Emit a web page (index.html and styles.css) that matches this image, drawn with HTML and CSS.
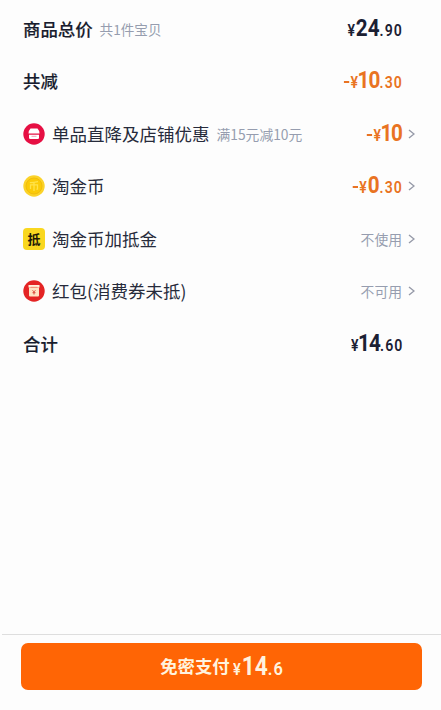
FILE: index.html
```html
<!DOCTYPE html>
<html lang="zh-CN">
<head>
<meta charset="utf-8">
<title>订单结算</title>
<link rel="stylesheet" href="styles.css">
</head>
<body>
<main class="summary">
  <div class="row total"><span class="label">商品总价</span><span class="note">共1件宝贝</span><span class="price"><span class="yen">¥</span><b>24</b><span class="cents">.90</span></span></div>
  <div class="row total"><span class="label">共减</span><span class="price off"><span class="minus"></span><span class="yen">¥</span><b class="narrow">10</b><span class="cents">.30</span></span></div>
  <div class="row">
    <svg class="icon" viewBox="0 0 22 22"><circle cx="11" cy="11" r="10.700" fill="#e60f43"/><path d="M7.500 5.500h7Q16.500 7.500 16.500 10.500h-11Q5.500 7.500 7.500 5.500z" fill="#fff"/><path d="M6 11.800h10v3q0 1.200-1.200 1.200H7.200Q6 16 6 14.800z" fill="#fff"/><path d="M8.500 13.300h5" stroke="#f08aa3" stroke-width=".8"/></svg>
    <span class="label">单品直降及店铺优惠</span><span class="note">满15元减10元</span><span class="price off"><span class="minus"></span><span class="yen">¥</span><b class="narrow whole">10</b></span>
    <svg class="chevron" viewBox="0 0 7 10"><path d="M1 1l5 4-5 4"/></svg>
  </div>
  <div class="row">
    <svg class="icon" viewBox="0 0 22 22"><circle cx="11" cy="11" r="10.700" fill="#fbd32a"/><circle cx="11" cy="11" r="8" fill="#fbcb08" stroke="#f2bd0c"/><path d="M6.800 7.700Q11 7.500 15 6.700M7.500 14V9.800h7V14l-1 .3M11 7.500V16" fill="none" stroke="#ffe34a" stroke-width="1.300"/></svg>
    <span class="label">淘金币</span><span class="price off"><span class="minus"></span><span class="yen">¥</span><b>0</b><span class="cents">.30</span></span>
    <svg class="chevron" viewBox="0 0 7 10"><path d="M1 1l5 4-5 4"/></svg>
  </div>
  <div class="row">
    <span class="icon badge">抵</span>
    <span class="label">淘金币加抵金</span><span class="status">不使用</span>
    <svg class="chevron" viewBox="0 0 7 10"><path d="M1 1l5 4-5 4"/></svg>
  </div>
  <div class="row">
    <svg class="icon" viewBox="0 0 22 22"><circle cx="11" cy="11" r="10.700" fill="#e42424"/><path d="M5.500 5h11v2.500h-11z" fill="#fff1dc"/><path d="M6 7.500h10v8q0 1-1 1H7q-1 0-1-1z" fill="#ffe3c4"/><path d="M7.500 7.300h7" stroke="#ef8263" stroke-width=".8"/><path d="M9.600 10.300l1.400 1.500 1.400-1.500M11 11.500v3M9.500 12.700h3" fill="none" stroke="#d9483b"/></svg>
    <span class="label">红包(消费券未抵)</span><span class="status">不可用</span>
    <svg class="chevron" viewBox="0 0 7 10"><path d="M1 1l5 4-5 4"/></svg>
  </div>
  <div class="row total"><span class="label">合计</span><span class="price"><span class="yen">¥</span><b class="narrow">14</b><span class="cents">.60</span></span></div>
</main>
<footer class="footer">
  <button class="pay" type="button"><span>免密支付</span><span class="price"><span class="yen">¥</span><b>14</b><span class="cents">.6</span></span></button>
</footer>
</body>
</html>
```
FILE: styles.css
```css
* { box-sizing: border-box; }
body {
  margin: 0;
  height: 710px;
  display: flex;
  flex-direction: column;
  background: #fdfdfd;
  color: #1b2033;
  font-family: "Noto Sans CJK SC", sans-serif;
}
.summary { flex: 1; padding: 2.5px 26px 0 23px; }
.row { height: 52.5px; display: flex; align-items: center; }
.label { font-size: 17.5px; line-height: 26px; white-space: nowrap; color: #272b3b; }
.total .label { font-size: 17.4px; font-weight: 500; color: #181c2d; -webkit-text-stroke: .15px; }
.total { padding-right: 13px; }
.note { margin-left: 7px; font-size: 13.8px; color: #969daf; white-space: nowrap; }
.total .note { font-size: 13.6px; }
.icon { width: 22px; height: 22px; margin-right: 7px; flex: none; }
.badge {
  border-radius: 4px;
  background: #f9d71f;
  color: #1d1907;
  font-size: 13px;
  line-height: 21px;
  font-weight: 700;
  text-align: center;
}
.price {
  margin-left: auto;
  padding-top: 1.200px;
  display: flex;
  align-items: baseline;
  font-family: Roboto, sans-serif;
  font-weight: 600;
  line-height: 26px;
  transform: scaleX(.88);
  transform-origin: right center;
}
.price b { font-size: 23.500px; font-weight: 700; }
.price .narrow { margin-left: -1.500px; letter-spacing: -1px; }
.price .whole { margin-right: .5px; letter-spacing: -1.500px; }
.yen { font-size: 16px; margin-right: 1px; }
.cents { font-size: 16px; letter-spacing: 1.200px; margin-right: -1px; }
.minus { align-self: center; width: 6px; height: 2px; margin: 1px 1.500px 0 0; background: currentColor; }
.off { color: #e97322; }
.status { margin-left: auto; font-size: 13.8px; color: #969daf; }
.chevron { width: 7px; height: 10px; margin-left: 6px; flex: none; }
.chevron path { fill: none; stroke: #969aa8; stroke-width: 1.4; }
.footer { height: 76px; margin-left: 2px; padding: 8px 19px 0 19px; border-top: 1px solid #dedede; }
.pay {
  width: 100%;
  height: 46.500px;
  padding: 0 0 0 5px;
  border: 0;
  border-radius: 7px;
  background: #ff6505;
  color: #fff3df;
  display: flex;
  align-items: center;
  justify-content: center;
  font: 700 17.4px/26px "Noto Sans CJK SC", sans-serif;
}
.pay .price { margin-left: 3px; padding-top: 4px; transform: scaleX(.91); transform-origin: left center; }
.pay b { font-size: 25px; }
.pay .cents { font-size: 18px; }
```
